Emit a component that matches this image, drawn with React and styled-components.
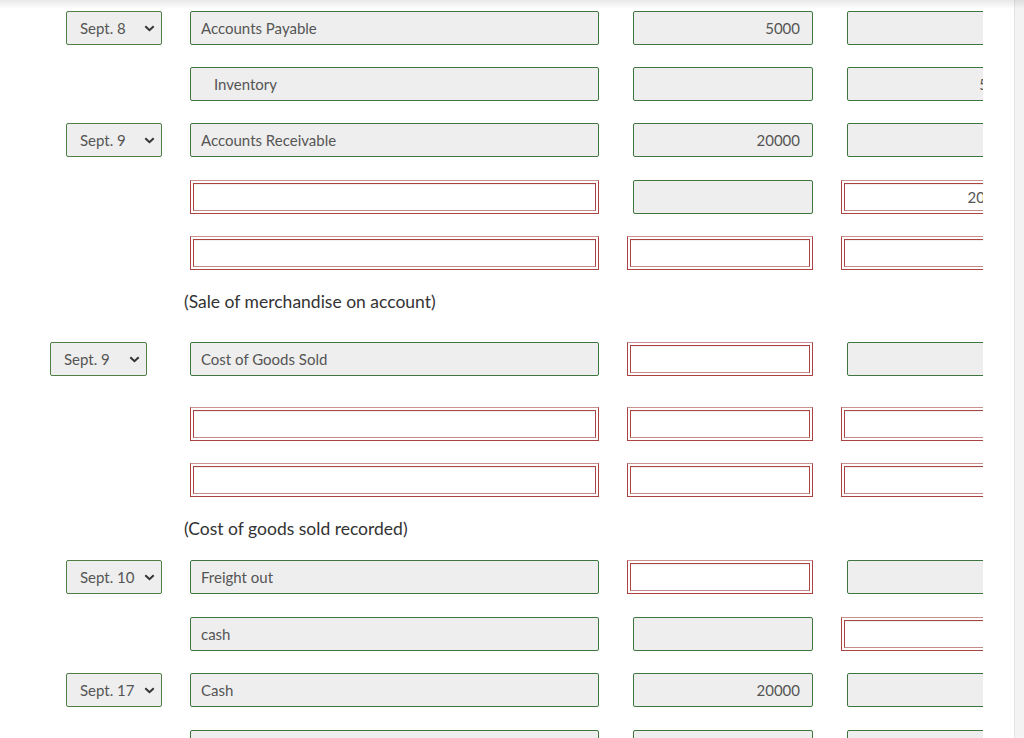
import React from "react";
import styled, { createGlobalStyle, css } from "styled-components";

const GlobalStyle = createGlobalStyle`
  html, body {
    margin: 0;
    padding: 0;
    background: #fff;
    overflow: hidden;
  }
  body {
    font-family: Lato, "Liberation Sans", sans-serif;
  }
`;

const rows = [
  { top: 11, date: "Sept. 8", account: "Accounts Payable", debit: "5000", credit: "" },
  { top: 22, account: "Inventory", indent: true, debit: "", credit: "5000" },
  { top: 22, date: "Sept. 9", account: "Accounts Receivable", debit: "20000", credit: "" },
  { top: 23, accountError: true, debit: "", creditError: true, credit: "20000" },
  { top: 22, accountError: true, debitError: true, creditError: true },
  { label: "(Sale of merchandise on account)", top: 22, bottom: 30 },
  { top: 0, date: "Sept. 9", shift: true, account: "Cost of Goods Sold", debitError: true, credit: "" },
  { top: 31, accountError: true, debitError: true, creditError: true },
  { top: 22, accountError: true, debitError: true, creditError: true },
  { label: "(Cost of goods sold recorded)", top: 22, bottom: 21 },
  { top: 0, date: "Sept. 10", account: "Freight out", debitError: true, credit: "" },
  { top: 23, account: "cash", debit: "", creditError: true },
  { top: 22, date: "Sept. 17", account: "Cash", debit: "20000", credit: "" },
  { top: 23, account: "", debit: "", credit: "" },
];

const Chevron = () => (
  <svg width="11" height="7" viewBox="0 0 11 7">
    <path d="M1.3 1.2 L5.5 5.2 L9.7 1.2" fill="none" stroke="#333" strokeWidth="2" />
  </svg>
);

const DateSelect = ({ value, shift }) => (
  <SelectWrap $shift={shift}>
    <Select defaultValue={value}>
      <option>{value}</option>
    </Select>
    <ChevronBox>
      <Chevron />
    </ChevronBox>
  </SelectWrap>
);

const Field = ({ value, indent, align, error }) =>
  error ? (
    <ErrorFrame>
      <ErrorInput defaultValue={value || ""} $align={align} />
    </ErrorFrame>
  ) : (
    <GreenInput readOnly defaultValue={value || ""} $align={align} $indent={indent} />
  );

const App = () => {
  return (
    <Frame>
      <GlobalStyle />
      <Viewport>
        <Sheet>
          {rows.map((r, i) =>
            r.label ? (
              <Label key={i} $top={r.top} $bottom={r.bottom}>
                {r.label}
              </Label>
            ) : (
              <Row key={i} $top={r.top}>
                <DateCell>{r.date && <DateSelect value={r.date} shift={r.shift} />}</DateCell>
                <Field value={r.account} indent={r.indent} error={r.accountError} />
                <AmountCell $error={r.debitError}>
                  <Field value={r.debit} align="right" error={r.debitError} />
                </AmountCell>
                <AmountCell $error={r.creditError}>
                  <Field value={r.credit} align="right" error={r.creditError} />
                </AmountCell>
              </Row>
            )
          )}
        </Sheet>
      </Viewport>
      <ScrollTrack />
      <TopShade />
    </Frame>
  );
};

export default App;

const Frame = styled.div`
  position: relative;
  display: flex;
  width: 1024px;
  height: 738px;
  overflow: hidden;
  background: #fff;
`;

const Viewport = styled.div`
  flex: 1;
  height: 100%;
  overflow: hidden;
`;

const Sheet = styled.div`
  width: 983px;
  overflow: hidden;
  display: flex;
  flex-direction: column;
`;

const ScrollTrack = styled.div`
  width: 9px;
  height: 100%;
  background: #f3f3f3;
  border-left: 1px solid #e4e4e4;
`;

const TopShade = styled.div`
  position: absolute;
  left: 0;
  top: 0;
  width: 100%;
  height: 9px;
  background: linear-gradient(rgba(0, 0, 0, 0.09), rgba(0, 0, 0, 0));
  pointer-events: none;
`;

const Row = styled.div`
  display: grid;
  grid-template-columns: 112px 409px 186px 186px;
  column-gap: 28px;
  margin-left: 50px;
  margin-top: ${(p) => p.$top}px;
  height: 34px;
  flex-shrink: 0;
`;

const Label = styled.div`
  margin-left: 184px;
  margin-top: ${(p) => p.$top}px;
  margin-bottom: ${(p) => p.$bottom}px;
  height: 20px;
  line-height: 20px;
  font-size: 17.5px;
  color: #333;
  white-space: nowrap;
`;

const DateCell = styled.div`
  display: flex;
`;

const SelectWrap = styled.div`
  position: relative;
  width: ${(p) => (p.$shift ? "97px" : "96px")};
  height: 34px;
  margin-left: ${(p) => (p.$shift ? "0" : "16px")};
`;

const Select = styled.select`
  appearance: none;
  -webkit-appearance: none;
  width: 100%;
  height: 100%;
  box-sizing: border-box;
  border: 1px solid #4f7f45;
  border-radius: 2px;
  background: #eee;
  padding: 0 0 0 13px;
  font-family: Lato, "Liberation Sans", sans-serif;
  font-size: 15px;
  color: #555;
  outline: none;
`;

const ChevronBox = styled.span`
  position: absolute;
  right: 7px;
  top: 14px;
  display: flex;
  pointer-events: none;
`;

const inputBase = css`
  box-sizing: border-box;
  width: 100%;
  font-family: Lato, "Liberation Sans", sans-serif;
  font-size: 15px;
  color: #555;
  outline: none;
  text-align: ${(p) => (p.$align === "right" ? "right" : "left")};
`;

const GreenInput = styled.input`
  ${inputBase};
  height: 34px;
  border: 1px solid #3c763d;
  border-radius: 2px;
  background: #eee;
  padding: 0 12px 0 ${(p) => (p.$indent ? "23px" : "10px")};
`;

const AmountCell = styled.div`
  display: flex;
  justify-content: flex-end;
  & > * {
    width: ${(p) => (p.$error ? "186px" : "180px")};
    flex-shrink: 0;
  }
`;

const ErrorFrame = styled.div`
  box-sizing: border-box;
  height: 34px;
  width: 100%;
  border: 1px solid #a94442;
  border-top-color: #c99190;
  padding: 2px;
  background: #fff;
`;

const ErrorInput = styled.input`
  ${inputBase};
  height: 100%;
  border: 1px solid #a94442;
  border-bottom-color: #c48b8a;
  background: #fff;
  padding: 0 12px 0 11px;
  box-shadow: inset 0 1px 0 rgba(0, 0, 0, 0.06);
`;
